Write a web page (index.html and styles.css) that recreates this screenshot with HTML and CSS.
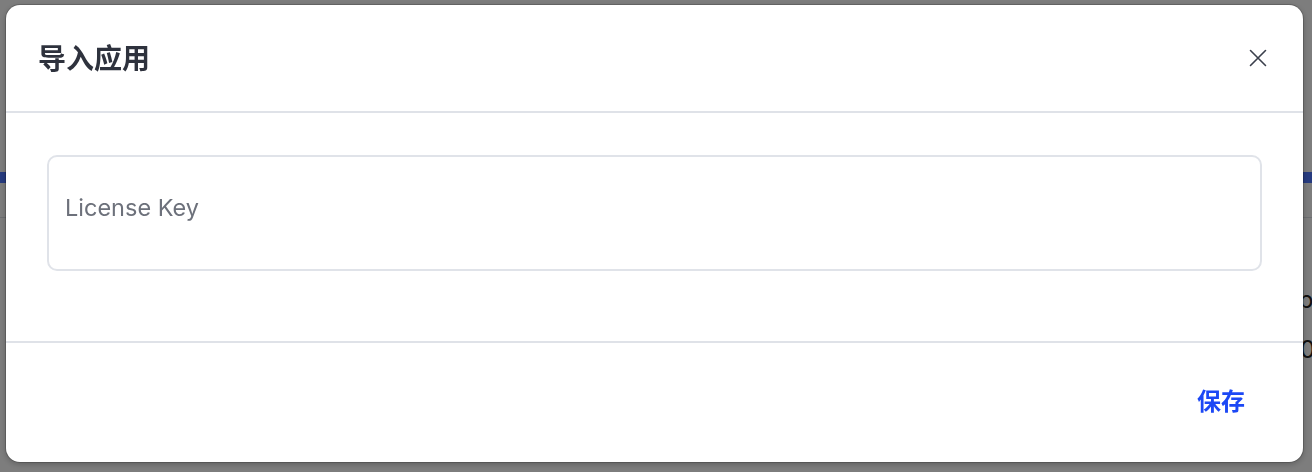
FILE: index.html
```html
<!DOCTYPE html>
<html lang="zh-CN">
<head>
    <meta charset="UTF-8">
    <meta name="viewport" content="width=device-width, initial-scale=1.0">
    <title>导入应用</title>
    <link rel="stylesheet" href="styles.css">
</head>
<body>
    <div class="page">
        <div class="page-bar"></div>
        <div class="page-rule"></div>
        <div class="page-row first">2b7f</div>
        <div class="page-row">30.0</div>
    </div>

    <div class="overlay">
        <div class="modal">
            <div class="modal-header">
                <h2 class="modal-title">导入应用</h2>
                <button type="button" class="modal-close" aria-label="关闭">
                    <svg width="18" height="18" viewBox="0 0 18 18">
                        <path d="M1.5 1.5 L16.5 16.5 M16.5 1.5 L1.5 16.5" stroke="#3b404c" stroke-width="1.6" stroke-linecap="round" fill="none"/>
                    </svg>
                </button>
            </div>
            <div class="modal-body">
                <input type="text" class="license-input" placeholder="License Key">
            </div>
            <div class="modal-footer">
                <button type="button" class="save-btn">保存</button>
            </div>
        </div>
    </div>
</body>
</html>
```

FILE: styles.css
```css
body {
    margin: 0;
    font-family: Inter, "Noto Sans CJK SC", sans-serif;
    background: #fbfbfb;
}
.page {
    height: 472px;
    padding-top: 172px;
    box-sizing: border-box;
    overflow: hidden;
}
.page-bar {
    height: 11px;
    background: #4d77ff;
}
.page-rule {
    height: 1px;
    margin-top: 34px;
    background: #d9dce2;
}
.page-row {
    text-align: right;
    margin-right: -24px;
    font-size: 24px;
    color: #222;
    line-height: 50px;
}
.page-row.first {
    margin-top: 57px;
}
.overlay {
    position: fixed;
    inset: 0;
    background: rgba(0, 0, 0, 0.5);
    padding: 5px 9px 10px 6px;
    display: flex;
}
.modal {
    flex: 1;
    display: flex;
    flex-direction: column;
    background: #fff;
    border-radius: 14px;
    box-shadow: 0 0 0 1px rgba(0, 0, 0, 0.18), 0 2px 6px rgba(0, 0, 0, 0.25);
    overflow: hidden;
}
.modal-header {
    height: 108px;
    display: flex;
    align-items: center;
    justify-content: space-between;
    padding: 0 36px 0 32px;
    border-bottom: 2px solid #dfe2e8;
    box-sizing: border-box;
}
.modal-title {
    margin: 0 0 2px;
    font-family: "Noto Sans CJK SC", sans-serif;
    font-size: 28px;
    font-weight: 700;
    color: #2e323d;
}
.modal-close {
    background: none;
    border: none;
    padding: 0;
    display: flex;
    cursor: pointer;
}
.modal-body {
    height: 230px;
    padding: 42px 41px 0 41px;
    box-sizing: border-box;
    border-bottom: 2px solid #dfe2e8;
}
.license-input {
    width: 100%;
    height: 116px;
    box-sizing: border-box;
    border: 2px solid #e0e3e9;
    border-radius: 10px;
    padding: 0 16px 12px;
    font-family: Inter, sans-serif;
    font-size: 23.5px;
    color: #333;
    outline: none;
}
.license-input::placeholder {
    color: #6d717b;
}
.modal-footer {
    flex: 1;
    display: flex;
    align-items: center;
    justify-content: flex-end;
    padding: 0 58px 6px 0;
}
.save-btn {
    background: none;
    border: none;
    padding: 0;
    font-family: "Noto Sans CJK SC", sans-serif;
    font-size: 24px;
    font-weight: 700;
    color: #1c48f5;
    cursor: pointer;
}
```
